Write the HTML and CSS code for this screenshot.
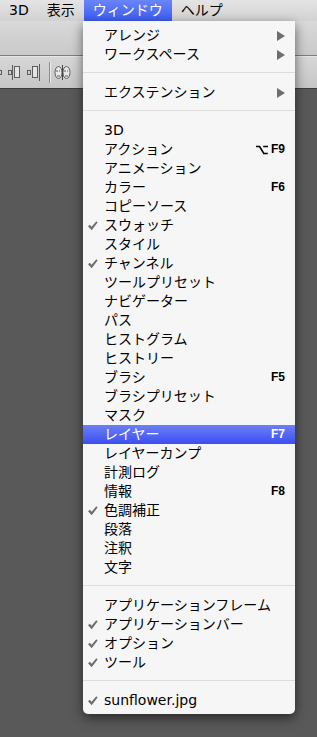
FILE: index.html
```html
<!DOCTYPE html>
<html lang="ja">
<head>
    <meta charset="UTF-8">
    <meta name="viewport" content="width=device-width, initial-scale=1.0">
    <title>ウィンドウ</title>
    <link rel="stylesheet" href="styles.css">
</head>
<body>

    <div class="menubar">
        <span class="mb-item">3D</span>
        <span class="mb-item">表示</span>
        <span class="mb-item active">ウィンドウ</span>
        <span class="mb-item">ヘルプ</span>
    </div>
    <div class="optionsbar"></div>
    <div class="toolbar">
        <!-- кнопки выравнивания и маска -->
        <svg class="tools" width="80" height="31" viewBox="0 0 80 31">
            <g fill="none" stroke="#5c5c5c" stroke-width="1">
                <rect x="-1.5" y="13.5" width="3" height="4"/>
                <rect x="8.5" y="13.5" width="3" height="4"/>
                <line x1="12.5" y1="8" x2="12.5" y2="23"/>
                <rect x="14.5" y="9.5" width="5" height="11" fill="#e4e4e4"/>
                <rect x="27.5" y="13.5" width="3" height="4"/>
                <rect x="32.5" y="9.5" width="5" height="11" fill="#e4e4e4"/>
                <line x1="39.5" y1="7" x2="39.5" y2="24"/>
                <ellipse cx="58.5" cy="15.5" rx="3.5" ry="6" fill="#e8e8e8"/>
                <ellipse cx="66.5" cy="15.5" rx="3.5" ry="6" fill="#e8e8e8"/>
                <line x1="62.5" y1="8" x2="62.5" y2="23" stroke="#444"/>
                <path d="M56 14h2M60 14h-1M64 14h2M68 14h-1M57 19h3M65 19h3"/>
            </g>
            <line x1="49.5" y1="5" x2="49.5" y2="26" stroke="#8a8a8a"/>
            <line x1="50.5" y1="5" x2="50.5" y2="26" stroke="#ececec"/>
        </svg>
    </div>
    <div class="workspace"></div>

    <div class="dropdown">
        <div class="item"><span class="mark"></span>アレンジ<span class="arrow"></span></div>
        <div class="item"><span class="mark"></span>ワークスペース<span class="arrow"></span></div>
        <div class="sep"></div>
        <div class="item"><span class="mark"></span>エクステンション<span class="arrow"></span></div>
        <div class="sep"></div>
        <div class="item"><span class="mark"></span>3D</div>
        <div class="item"><span class="mark"></span>アクション<span class="key"><svg class="opt" width="12" height="10" viewBox="0 0 12 10"><path d="M0 1.5h3.6l4.2 7h4M7.2 1.5h4.8" fill="none" stroke="#000" stroke-width="1.6"/></svg>F9</span></div>
        <div class="item"><span class="mark"></span>アニメーション</div>
        <div class="item"><span class="mark"></span>カラー<span class="key">F6</span></div>
        <div class="item"><span class="mark"></span>コピーソース</div>
        <div class="item"><span class="mark"><svg class="check" width="10" height="10" viewBox="0 0 10 10"><path d="M0 5.2 1.8 3.8 3.6 5.8 8.3 0.3 9.6 1.5 3.7 9.2Z"/></svg></span>スウォッチ</div>
        <div class="item"><span class="mark"></span>スタイル</div>
        <div class="item"><span class="mark"><svg class="check" width="10" height="10" viewBox="0 0 10 10"><path d="M0 5.2 1.8 3.8 3.6 5.8 8.3 0.3 9.6 1.5 3.7 9.2Z"/></svg></span>チャンネル</div>
        <div class="item"><span class="mark"></span>ツールプリセット</div>
        <div class="item"><span class="mark"></span>ナビゲーター</div>
        <div class="item"><span class="mark"></span>パス</div>
        <div class="item"><span class="mark"></span>ヒストグラム</div>
        <div class="item"><span class="mark"></span>ヒストリー</div>
        <div class="item"><span class="mark"></span>ブラシ<span class="key">F5</span></div>
        <div class="item"><span class="mark"></span>ブラシプリセット</div>
        <div class="item"><span class="mark"></span>マスク</div>
        <div class="item selected"><span class="mark"></span>レイヤー<span class="key">F7</span></div>
        <div class="item"><span class="mark"></span>レイヤーカンプ</div>
        <div class="item"><span class="mark"></span>計測ログ</div>
        <div class="item"><span class="mark"></span>情報<span class="key">F8</span></div>
        <div class="item"><span class="mark"><svg class="check" width="10" height="10" viewBox="0 0 10 10"><path d="M0 5.2 1.8 3.8 3.6 5.8 8.3 0.3 9.6 1.5 3.7 9.2Z"/></svg></span>色調補正</div>
        <div class="item"><span class="mark"></span>段落</div>
        <div class="item"><span class="mark"></span>注釈</div>
        <div class="item"><span class="mark"></span>文字</div>
        <div class="sep"></div>
        <div class="item"><span class="mark"></span>アプリケーションフレーム</div>
        <div class="item"><span class="mark"><svg class="check" width="10" height="10" viewBox="0 0 10 10"><path d="M0 5.2 1.8 3.8 3.6 5.8 8.3 0.3 9.6 1.5 3.7 9.2Z"/></svg></span>アプリケーションバー</div>
        <div class="item"><span class="mark"><svg class="check" width="10" height="10" viewBox="0 0 10 10"><path d="M0 5.2 1.8 3.8 3.6 5.8 8.3 0.3 9.6 1.5 3.7 9.2Z"/></svg></span>オプション</div>
        <div class="item"><span class="mark"><svg class="check" width="10" height="10" viewBox="0 0 10 10"><path d="M0 5.2 1.8 3.8 3.6 5.8 8.3 0.3 9.6 1.5 3.7 9.2Z"/></svg></span>ツール</div>
        <div class="sep"></div>
        <div class="item"><span class="mark"><svg class="check" width="10" height="10" viewBox="0 0 10 10"><path d="M0 5.2 1.8 3.8 3.6 5.8 8.3 0.3 9.6 1.5 3.7 9.2Z"/></svg></span>sunflower.jpg</div>
    </div>

</body>
</html>
```

FILE: styles.css
```css
body {
    font-family: "DejaVu Sans", "Noto Sans CJK JP", sans-serif;
    font-size: 14px;
    color: #000000;
    background-color: #595959;
    margin: 0;
    padding: 0;
    width: 317px;
    height: 737px;
    overflow: hidden;
    position: relative;
}

/* Верхнее меню */
.menubar {
    display: flex;
    height: 21px;
    background: linear-gradient(#e4e4e4, #d2d2d2);
}
.mb-item {
    padding: 0 9px;
    line-height: 21px;
    white-space: nowrap;
}
.mb-item.active {
    background: linear-gradient(#6985f8, #3d5cf2);
    color: #ffffff;
}

/* Панели */
.optionsbar {
    height: 34px;
    background: linear-gradient(#d9d9d9, #c9c9c9);
    border-bottom: 1px solid #7e7e7e;
}
.toolbar {
    height: 31px;
    background: linear-gradient(#d6d6d6, #c6c6c6);
    border-top: 1px solid #e6e6e6;
    border-bottom: 1px solid #3c3c3c;
}
.tools {
    display: block;
}
.workspace {
    background-color: #595959;
}

/* Выпадающее меню */
.dropdown {
    position: absolute;
    left: 83px;
    top: 21px;
    width: 212px;
    padding: 5px 0 4px;
    background-color: #f6f6f6;
    border-radius: 0 0 5px 5px;
    box-shadow: 0 4px 12px rgba(0, 0, 0, 0.55);
}
.item {
    display: flex;
    align-items: center;
    height: 19px;
    line-height: 19px;
    padding: 0 10px 0 5px;
    white-space: nowrap;
}
.mark {
    width: 16px;
    flex: none;
    display: flex;
    align-items: center;
}
.check {
    display: block;
    fill: #6f6f6f;
    margin-top: 1px;
}
.key {
    margin-left: auto;
    display: flex;
    align-items: center;
    font-family: "Liberation Sans", Arial, sans-serif;
    font-weight: bold;
    font-size: 12px;
}
.opt {
    margin-right: 3px;
}
.arrow {
    margin-left: auto;
    width: 0;
    height: 0;
    border-left: 8px solid #6e6e6e;
    border-top: 5px solid transparent;
    border-bottom: 5px solid transparent;
}
.item.selected {
    background: linear-gradient(#6c7ff8, #3c4ff1);
    color: #ffffff;
}
.sep {
    margin: 8px 0 10px;
    border-top: 1px solid #dcdcdc;
}
```
